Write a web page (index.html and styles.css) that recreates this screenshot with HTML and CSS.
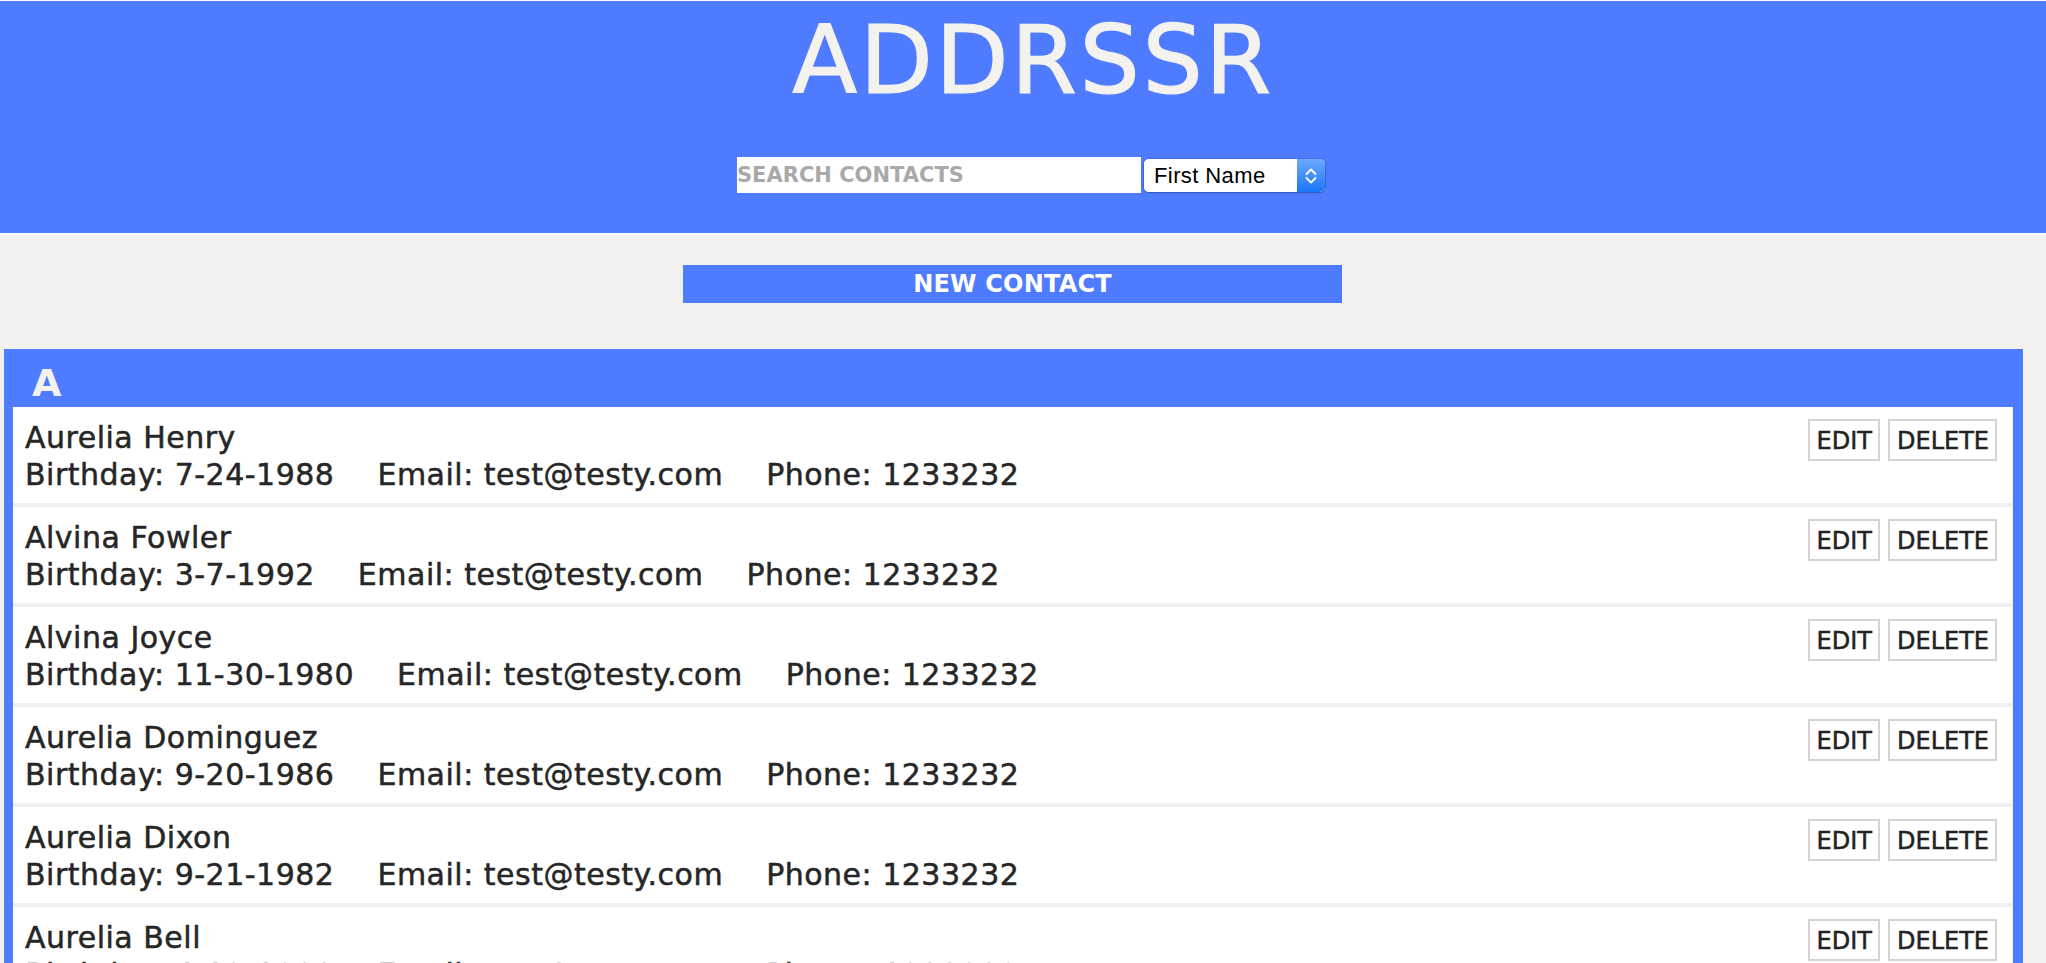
FILE: index.html
```html
<!DOCTYPE html>
<html lang="en">
<head>
<meta charset="utf-8">
<title>ADDRSSR</title>
<link rel="stylesheet" href="styles.css">
</head>
<body>
<header class="top">
  <h1 class="brand">ADDRSSR</h1>
  <div class="search">
    <input class="search-input" type="text" placeholder="SEARCH CONTACTS">
    <div class="sort">
      <select class="sort-select">
        <option>First Name</option>
        <option>Last Name</option>
        <option>Birthday</option>
      </select>
      <span class="sort-arrows">
        <svg width="28" height="33" viewBox="0 0 28 33" aria-hidden="true">
          <path d="M9.5 15 L14 10.5 L18.5 15" fill="none" stroke="#fff" stroke-width="1.8" stroke-linecap="round" stroke-linejoin="round"/>
          <path d="M9.5 19 L14 23.5 L18.5 19" fill="none" stroke="#fff" stroke-width="1.8" stroke-linecap="round" stroke-linejoin="round"/>
        </svg>
      </span>
    </div>
  </div>
</header>
<main>
  <div class="actions">
    <button class="new-contact">NEW CONTACT</button>
  </div>
  <section class="group">
    <h2 class="group-letter">A</h2>
    <ul class="contact-list">
      <li class="contact">
        <div class="contact-info">
          <div class="contact-name">Aurelia Henry</div>
          <div class="contact-details"><span>Birthday: 7-24-1988</span><span>Email: test@testy.com</span><span>Phone: 1233232</span></div>
        </div>
        <div class="contact-actions"><button class="btn">EDIT</button><button class="btn">DELETE</button></div>
      </li>
      <li class="contact">
        <div class="contact-info">
          <div class="contact-name">Alvina Fowler</div>
          <div class="contact-details"><span>Birthday: 3-7-1992</span><span>Email: test@testy.com</span><span>Phone: 1233232</span></div>
        </div>
        <div class="contact-actions"><button class="btn">EDIT</button><button class="btn">DELETE</button></div>
      </li>
      <li class="contact">
        <div class="contact-info">
          <div class="contact-name">Alvina Joyce</div>
          <div class="contact-details"><span>Birthday: 11-30-1980</span><span>Email: test@testy.com</span><span>Phone: 1233232</span></div>
        </div>
        <div class="contact-actions"><button class="btn">EDIT</button><button class="btn">DELETE</button></div>
      </li>
      <li class="contact">
        <div class="contact-info">
          <div class="contact-name">Aurelia Dominguez</div>
          <div class="contact-details"><span>Birthday: 9-20-1986</span><span>Email: test@testy.com</span><span>Phone: 1233232</span></div>
        </div>
        <div class="contact-actions"><button class="btn">EDIT</button><button class="btn">DELETE</button></div>
      </li>
      <li class="contact">
        <div class="contact-info">
          <div class="contact-name">Aurelia Dixon</div>
          <div class="contact-details"><span>Birthday: 9-21-1982</span><span>Email: test@testy.com</span><span>Phone: 1233232</span></div>
        </div>
        <div class="contact-actions"><button class="btn">EDIT</button><button class="btn">DELETE</button></div>
      </li>
      <li class="contact">
        <div class="contact-info">
          <div class="contact-name">Aurelia Bell</div>
          <div class="contact-details"><span>Birthday: 4-12-1990</span><span>Email: test@testy.com</span><span>Phone: 1233232</span></div>
        </div>
        <div class="contact-actions"><button class="btn">EDIT</button><button class="btn">DELETE</button></div>
      </li>
    </ul>
  </section>
</main>
</body>
</html>
```

FILE: styles.css
```css
html {
  scrollbar-width: none;
  background: #f2f1ef;
}

body {
  margin: 0;
  background: #f2f1ef;
  font-family: "DejaVu Sans", "Liberation Sans", sans-serif;
  color: #262626;
}

.top {
  background: #4e7bff;
  border-top: 1px solid #ffffff;
  border-bottom: 2px solid #ffffff;
  padding-bottom: 40px;
}

.brand {
  margin: 0;
  padding: 9px 0 0 20px;
  text-align: center;
  font-size: 95px;
  font-weight: normal;
  line-height: 100px;
  letter-spacing: 2.5px;
  color: #f3f2ef;
  -webkit-text-stroke: 1.2px #f3f2ef;
}

.search {
  margin-top: 47px;
  padding-left: 16px;
  display: flex;
  justify-content: center;
  align-items: center;
  gap: 3px;
}

.search-input {
  width: 404px;
  height: 36px;
  box-sizing: border-box;
  border: none;
  outline: none;
  padding: 0;
  margin: 0;
  background: #ffffff;
  font-family: "DejaVu Sans", sans-serif;
  font-weight: bold;
  font-size: 21px;
  color: #444;
}

.search-input::placeholder {
  color: #a9a9a9;
  opacity: 1;
}

.sort {
  display: flex;
  width: 181px;
  height: 33px;
  border-radius: 5px;
  overflow: hidden;
  background: #ffffff;
  box-shadow: 0 0 0 1px rgba(40, 70, 160, 0.25), 0 1px 2px rgba(0, 0, 0, 0.25);
}

.sort-select {
  appearance: none;
  -webkit-appearance: none;
  flex: 1;
  min-width: 0;
  height: 33px;
  border: none;
  outline: none;
  margin: 0;
  padding: 0 0 0 10px;
  background: #ffffff;
  font-family: "Liberation Sans", Arial, sans-serif;
  font-size: 22px;
  letter-spacing: 0.4px;
  line-height: 33px;
  color: #000;
}

.sort-arrows {
  width: 28px;
  height: 33px;
  display: flex;
  background: linear-gradient(#6da9ff, #1b75f7);
}

.actions {
  display: flex;
  justify-content: center;
  margin-top: 30px;
  padding-right: 21px;
}

.new-contact {
  width: 659px;
  height: 38px;
  border: none;
  margin: 0;
  padding: 0;
  background: #4e7bff;
  color: #ffffff;
  font-family: "DejaVu Sans", sans-serif;
  font-weight: bold;
  font-size: 24px;
  letter-spacing: 0.2px;
  line-height: 38px;
}

.group {
  margin: 46px 23px 0 4px;
  padding: 0 10px 0 9px;
  background: #4e7bff;
}

.group-letter {
  margin: 0;
  padding: 10px 0 0 19px;
  font-size: 38px;
  line-height: 48px;
  font-weight: bold;
  color: #f3f2f0;
}

.contact-list {
  list-style: none;
  margin: 0;
  padding: 0;
}

.contact {
  display: flex;
  justify-content: space-between;
  align-items: flex-start;
  background: #ffffff;
  padding: 12px 15px 10px 12px;
  border-bottom: 4px solid #efefef;
  border-right: 1px solid #ececec;
}

.contact-info {
  font-size: 30px;
  line-height: 37px;
  letter-spacing: 0.5px;
  color: #262626;
  -webkit-text-stroke: 0.5px #262626;
}

.contact-details {
  display: flex;
  gap: 43px;
}

.contact-actions {
  display: flex;
  gap: 8px;
}

.btn {
  margin: 0;
  padding: 2px 6px 0 7px;
  height: 42px;
  box-sizing: border-box;
  border: 2px solid #d4d4d4;
  background: #ffffff;
  font-family: "DejaVu Sans", sans-serif;
  font-size: 24px;
  line-height: 36px;
  color: #222;
  -webkit-text-stroke: 0.5px #222;
}
```
